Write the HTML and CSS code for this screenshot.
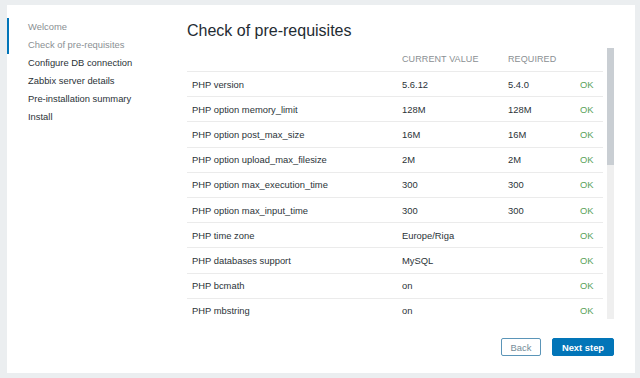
FILE: index.html
```html
<!DOCTYPE html>
<html>
<head>
<meta charset="utf-8">
<link rel="stylesheet" href="styles.css">
</head>
<body>
<div class="panel">
  <nav class="nav">
    <ul class="steps">
      <li class="step done first">Welcome</li>
      <li class="step done">Check of pre-requisites</li>
      <li class="step">Configure DB connection</li>
      <li class="step">Zabbix server details</li>
      <li class="step">Pre-installation summary</li>
      <li class="step">Install</li>
    </ul>
  </nav>
  <main class="content">
    <h1 class="title">Check of pre-requisites</h1>
    <div class="scroll">
      <div class="table">
        <div class="row head"><span></span><span>Current value</span><span>Required</span><span></span></div>
        <div class="row"><span>PHP version</span><span>5.6.12</span><span>5.4.0</span><span class="ok">OK</span></div>
        <div class="row"><span>PHP option memory_limit</span><span>128M</span><span>128M</span><span class="ok">OK</span></div>
        <div class="row"><span>PHP option post_max_size</span><span>16M</span><span>16M</span><span class="ok">OK</span></div>
        <div class="row"><span>PHP option upload_max_filesize</span><span>2M</span><span>2M</span><span class="ok">OK</span></div>
        <div class="row"><span>PHP option max_execution_time</span><span>300</span><span>300</span><span class="ok">OK</span></div>
        <div class="row"><span>PHP option max_input_time</span><span>300</span><span>300</span><span class="ok">OK</span></div>
        <div class="row"><span>PHP time zone</span><span>Europe/Riga</span><span></span><span class="ok">OK</span></div>
        <div class="row"><span>PHP databases support</span><span>MySQL</span><span></span><span class="ok">OK</span></div>
        <div class="row"><span>PHP bcmath</span><span>on</span><span></span><span class="ok">OK</span></div>
        <div class="row"><span>PHP mbstring</span><span>on</span><span></span><span class="ok">OK</span></div>
      </div>
      <div class="scrollbar"><div class="thumb"></div></div>
    </div>
    <div class="buttons">
      <button class="btn btn-back">Back</button>
      <button class="btn btn-next">Next step</button>
    </div>
  </main>
</div>
</body>
</html>
```
FILE: styles.css
```css
html, body {
  margin: 0;
  padding: 0;
}
body {
  background: #ebeef0;
  font-family: "Liberation Sans", Arial, sans-serif;
  font-size: 9.4px;
  color: #1f2c33;
  padding: 5px 5px 5px 7px;
  height: 378px;
  box-sizing: border-box;
}
.panel {
  background: #fff;
  height: 368px;
  display: flex;
  box-sizing: border-box;
}
.nav {
  width: 180px;
  flex: none;
  padding-top: 13px;
}
.steps {
  list-style: none;
  margin: 0;
  padding: 0;
}
.step {
  line-height: 18px;
  height: 18px;
  padding-left: 21px;
  color: #2b3338;
  white-space: nowrap;
}
.step.done {
  color: #8a8f93;
  border-left: 2px solid #0275b8;
  padding-left: 19px;
}
.content {
  width: 427px;
  display: flex;
  flex-direction: column;
}
.title {
  margin: 16px 0 6px 0;
  font-size: 16px;
  line-height: 20px;
  font-weight: normal;
  color: #1f2c33;
}
.scroll {
  display: flex;
  gap: 4px;
  height: 272px;
  overflow: hidden;
}
.table {
  width: 416px;
  flex: none;
}
.row {
  display: grid;
  grid-template-columns: 210px 106px 72px 28px;
  height: 24.2px;
  align-items: center;
  border-bottom: 1px solid #ebebeb;
  color: #2b3338;
}
.row span {
  padding-left: 5px;
  white-space: nowrap;
}
.row.head {
  height: 24px;
  color: #8a8f93;
  font-size: 9px;
  text-transform: uppercase;
  letter-spacing: 0.1px;
}
.row .ok {
  color: #59a25a;
}
.scrollbar {
  width: 7px;
  flex: none;
  background: #efefef;
  margin-top: 1px;
}
.thumb {
  height: 117px;
  background: #c9ced3;
}
.buttons {
  display: flex;
  justify-content: flex-end;
  gap: 11px;
  margin-top: 19px;
}
.btn {
  font-family: "Liberation Sans", Arial, sans-serif;
  font-size: 9.4px;
  height: 18px;
  padding: 0;
  border-radius: 2px;
  box-sizing: border-box;
  cursor: pointer;
}
.btn-back {
  width: 40px;
  background: #fff;
  border: 1px solid #5b95b8;
  color: #768d99;
}
.btn-next {
  width: 62px;
  background: #0275b8;
  border: 1px solid #0275b8;
  color: #fff;
  font-weight: bold;
}
```
